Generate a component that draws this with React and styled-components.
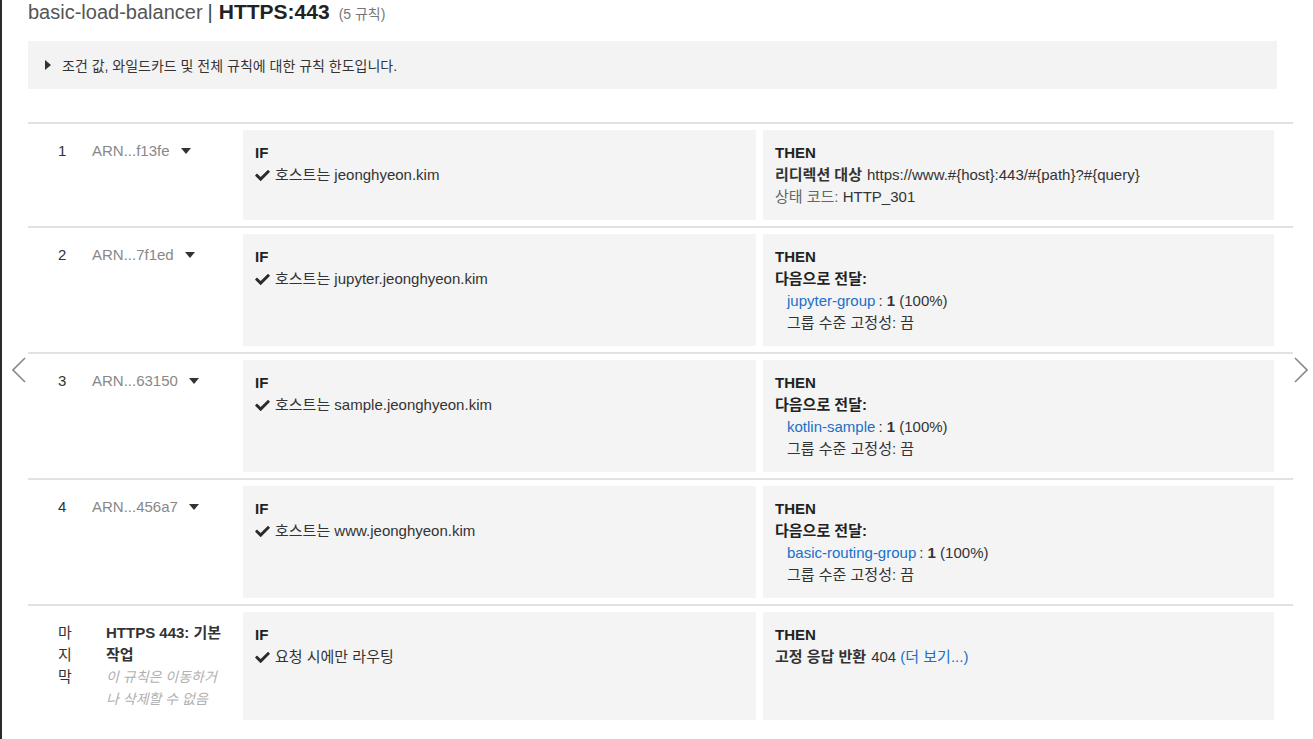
import React from "react";
import styled, { createGlobalStyle } from "styled-components";

const Global = createGlobalStyle`
  html, body {
    margin: 0;
    padding: 0;
    background: #ffffff;
  }
  body {
    font-family: "Liberation Sans", "Noto Sans CJK KR", sans-serif;
    font-size: 15px;
    color: #333;
  }
`;

const Page = styled.div`
  display: grid;
  grid-template-columns: 26px 1265px 20px;
  height: 100vh;
  overflow: hidden;
  border-left: 2px solid #2b2b2b;
  box-sizing: border-box;
`;

const Arrow = styled.button`
  align-self: center;
  justify-self: start;
  margin-left: ${(p) => (p.$side === "left" ? "10px" : "1px")};
  background: none;
  border: 0;
  padding: 0;
  display: flex;
  cursor: pointer;
`;

const Content = styled.div`
  display: flex;
  flex-direction: column;
`;

const Title = styled.h1`
  margin: 0;
  height: 24px;
  font-size: 20px;
  line-height: 24px;
  font-weight: normal;
  color: #555;
  white-space: nowrap;

  .sep {
    color: #444;
    margin: 0 6px 0 5px;
  }
  strong {
    font-size: 21px;
    color: #222;
  }
  small {
    font-size: 14px;
    color: #777;
    margin-left: 9px;
  }
`;

const Notice = styled.div`
  margin: 17px 16px 0 0;
  height: 48px;
  background: #f3f3f3;
  display: flex;
  align-items: center;
  padding-left: 17px;
  gap: 11px;
  font-size: 14px;
  color: #333;
`;

const Rules = styled.div`
  margin-top: 33px;
  display: flex;
  flex-direction: column;
`;

const Row = styled.div`
  display: grid;
  grid-template-columns: ${(p) => p.$cols};
  column-gap: 7px;
  border-top: 2px solid #e2e2e2;
  padding: 6px 19px 6px 30px;
`;

const Num = styled.div`
  padding: 10px 0;
  line-height: 22px;
  width: ${(p) => p.$width || "auto"};
  color: #333;
`;

const Arn = styled.div`
  padding: 10px 0;
  line-height: 22px;
  color: #888;
  display: flex;
  align-items: center;
  gap: 11px;
  height: 22px;
  box-sizing: content-box;
`;

const Label = styled.div`
  padding: 10px 0;
  line-height: 22px;

  b {
    display: block;
    color: #333;
  }
  i {
    display: block;
    max-width: 116px;
    font-size: 14px;
    color: #b0b0b0;
  }
`;

const Cell = styled.div`
  background: #f4f4f4;
  padding: 12px 12px 12px;
  line-height: 22px;
  color: #333;
`;

const Head = styled.div`
  font-weight: bold;
  color: #222;
`;

const Line = styled.div`
  display: flex;
  align-items: center;
  gap: ${(p) => p.$gap || "0"};
  color: ${(p) => (p.$muted ? "#666" : "#333")};

  b {
    font-weight: bold;
    margin-right: 5px;
  }
`;

const Target = styled.div`
  padding-left: 12px;
  line-height: 22px;
`;

const Link = styled.a`
  color: #1a6fc9;
  text-decoration: none;
  margin-right: ${(p) => p.$mr || "0"};
`;

const Check = () => (
  <svg width="15" height="12" viewBox="0 0 512 420">
    <path
      fill="#2b2b2b"
      d="M173.9 410.4L7.5 244c-10-10-10-26.2 0-36.2l36.2-36.2c10-10 26.2-10 36.2 0L192 283.7 432.1 43.6c10-10 26.2-10 36.2 0l36.2 36.2c10 10 10 26.2 0 36.2L210.1 410.4c-10 10-26.2 10-36.2 0z"
    />
  </svg>
);

const Caret = () => (
  <svg width="10" height="6" viewBox="0 0 10 6">
    <path d="M0 0h10L5 6z" fill="#333" />
  </svg>
);

const Chevron = ({ dir }) => (
  <svg width="14" height="26" viewBox="0 0 14 26">
    <polyline
      points={dir === "left" ? "13,1 1,13 13,25" : "1,1 13,13 1,25"}
      fill="none"
      stroke="#8a8a8a"
      strokeWidth="1.6"
    />
  </svg>
);

const ifCell = (text) => (
  <Cell>
    <Head>IF</Head>
    <Line $gap="5px">
      <Check />
      <span>{text}</span>
    </Line>
  </Cell>
);

const forward = (group) => (
  <Cell>
    <Head>THEN</Head>
    <Head>다음으로 전달:</Head>
    <Target>
      <div>
        <Link href="#" $mr="3px">{group}</Link>: <strong>1</strong> (100%)
      </div>
      <div>그룹 수준 고정성: 끔</div>
    </Target>
  </Cell>
);

const rules = [
  { n: 1, arn: "ARN...f13fe", host: "jeonghyeon.kim", then: null },
  { n: 2, arn: "ARN...7f1ed", host: "jupyter.jeonghyeon.kim", then: "jupyter-group" },
  { n: 3, arn: "ARN...63150", host: "sample.jeonghyeon.kim", then: "kotlin-sample" },
  { n: 4, arn: "ARN...456a7", host: "www.jeonghyeon.kim", then: "basic-routing-group" },
];

const ruleCols = "27px 144px 513px 511px";
const lastCols = "41px 130px 513px 511px";

export default function App() {
  return (
    <>
      <Global />
      <Page>
        <Arrow $side="left" aria-label="previous">
          <Chevron dir="left" />
        </Arrow>
        <Content>
          <Title>
            basic-load-balancer<span className="sep">|</span>
            <strong>HTTPS:443</strong>
            <small>(5 규칙)</small>
          </Title>
          <Notice>
            <svg width="6" height="10" viewBox="0 0 6 10">
              <path d="M0 0l6 5-6 5z" fill="#333" />
            </svg>
            <span>조건 값, 와일드카드 및 전체 규칙에 대한 규칙 한도입니다.</span>
          </Notice>
          <Rules>
            {rules.map((r) => (
              <Row key={r.n} $cols={ruleCols}>
                <Num>{r.n}</Num>
                <Arn>
                  <span>{r.arn}</span>
                  <Caret />
                </Arn>
                {ifCell(`호스트는 ${r.host}`)}
                {r.then ? (
                  forward(r.then)
                ) : (
                  <Cell>
                    <Head>THEN</Head>
                    <Line>
                      <b>리디렉션 대상</b>
                      <span>https://www.#&#123;host&#125;:443/#&#123;path&#125;?#&#123;query&#125;</span>
                    </Line>
                    <Line $muted>
                      상태 코드:&nbsp;<span style={{ color: "#333" }}>HTTP_301</span>
                    </Line>
                  </Cell>
                )}
              </Row>
            ))}
            <Row $cols={lastCols}>
              <Num $width="16px">마지막</Num>
              <Label>
                <b>HTTPS 443: 기본 작업</b>
                <i>이 규칙은 이동하거나 삭제할 수 없음</i>
              </Label>
              {ifCell("요청 시에만 라우팅")}
              <Cell>
                <Head>THEN</Head>
                <Line>
                  <b>고정 응답 반환</b>
                  <span>404&nbsp;</span>
                  <Link href="#">(더 보기...)</Link>
                </Line>
              </Cell>
            </Row>
          </Rules>
        </Content>
        <Arrow $side="right" aria-label="next">
          <Chevron dir="right" />
        </Arrow>
      </Page>
    </>
  );
}
